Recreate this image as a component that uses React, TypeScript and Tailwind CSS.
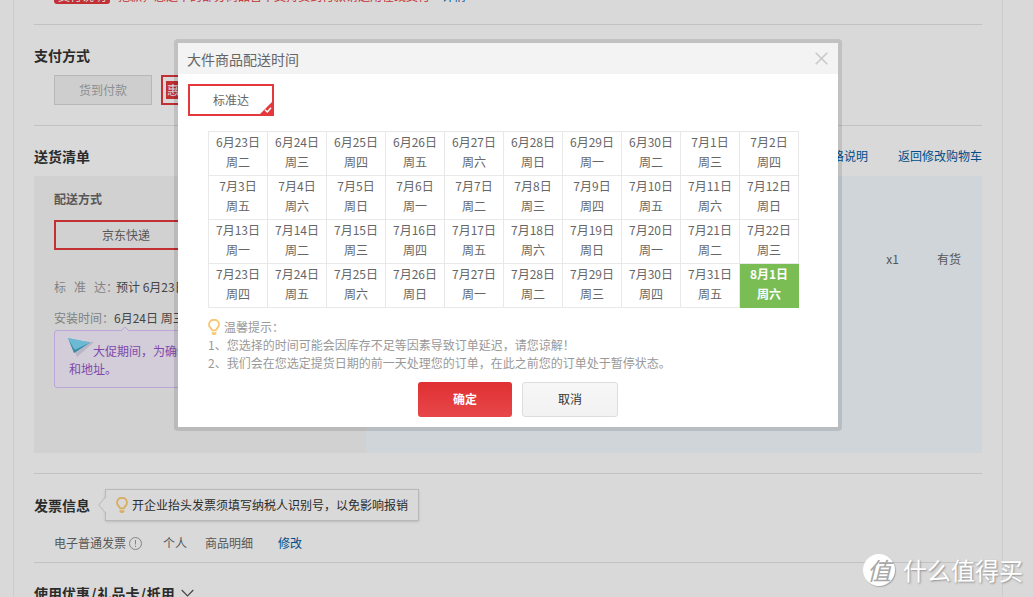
import { useState } from "react";

type BulbProps = {
  color: string;
};

const WEEKDAYS = ["日", "一", "二", "三", "四", "五", "六"];
const COLUMNS = 10;
const TOTAL_DAYS = 40;

// 2020-06-23 is the first day that can be delivered
function buildDates() {
  return Array.from({ length: TOTAL_DAYS }, (_, i) => {
    const date = new Date(2020, 5, 23 + i);
    return {
      day: `${date.getMonth() + 1}月${date.getDate()}日`,
      weekday: `周${WEEKDAYS[date.getDay()]}`,
    };
  });
}

const DATES = buildDates();
const ROWS = Array.from({ length: TOTAL_DAYS / COLUMNS }, (_, r) =>
  DATES.slice(r * COLUMNS, (r + 1) * COLUMNS)
);

function Bulb({ color }: BulbProps) {
  return (
    <svg width="12" height="16" viewBox="0 0 12 16" fill="none" aria-hidden="true">
      <path
        d="M4.2 11.4C4.1 9.7 1 8.8 1 5.7a5 5 0 0 1 10 0c0 3.1-3.1 4-3.2 5.7z"
        stroke={color}
        strokeWidth="1.9"
        strokeLinejoin="round"
      />
      <path d="M3.6 13.2h4.8v1.1L7.3 16H4.7l-1.1-1.7z" fill={color} />
    </svg>
  );
}

function PaperPlane() {
  return (
    <svg
      className="absolute left-3 top-1.5"
      width="28"
      height="22"
      viewBox="0 0 28 22"
      aria-hidden="true"
    >
      <path d="M3 3 27 5 10 20z" fill="#8a8aa0" opacity="0.35" />
      <path d="M1 1 23 5.5 7 16z" fill="#6cb9d3" />
      <path d="M1 1 6.5 11 7 16z" fill="#3d8aa5" />
      <path d="M6.5 11 23 5.5 7 16z" fill="#3287a3" />
      <path d="M1 1 23 5.5 8 13z" fill="#6cb9d3" />
    </svg>
  );
}

function DeliveryDialog() {
  const [selected, setSelected] = useState("8月1日");

  return (
    <div className="absolute inset-x-0 top-[39px] flex justify-center">
      <div
        role="dialog"
        aria-labelledby="dialog-title"
        className="rounded-[4px] bg-black/11 p-1 text-[#666666]"
      >
        <div className="w-[660px] bg-white">
          <div className="flex h-[31px] items-center justify-between bg-[#f3f3f3] pl-[9px] pr-[10px]">
            <h2 id="dialog-title" className="text-sm">
              大件商品配送时间
            </h2>
            <button type="button" aria-label="关闭">
              <svg width="13" height="13" viewBox="0 0 13 13" aria-hidden="true">
                <path d="M.7.7l11.6 11.6M12.3.7.7 12.3" stroke="#c9c9c9" strokeWidth="1.6" />
              </svg>
            </button>
          </div>

          <div className="p-[10px]">
            <button
              type="button"
              className="relative block h-8 w-[86px] border-2 border-[#e4393c] bg-white"
            >
              标准达
              <svg
                className="absolute bottom-0 right-0"
                width="12"
                height="12"
                viewBox="0 0 12 12"
                aria-hidden="true"
              >
                <path d="M12 0v12H0z" fill="#e4393c" />
                <path d="M5 7.8 7.3 10 11 5.8" stroke="#fff" strokeWidth="1.5" fill="none" />
              </svg>
            </button>

            <div className="mt-[15px] pl-5">
              <table className="border-separate border-spacing-0 border-l border-t border-[#e8e8e8]">
                <tbody>
                  {ROWS.map((row) => (
                    <tr key={row[0].day}>
                      {row.map(({ day, weekday }) => (
                        <td
                          key={day}
                          className={
                            day === selected
                              ? "border-b border-r border-[#7abd54] bg-[#7abd54] p-0 font-bold text-white"
                              : "border-b border-r border-[#e8e8e8] p-0"
                          }
                        >
                          <button
                            type="button"
                            onClick={() => setSelected(day)}
                            className="block w-[58px] pb-[3px] leading-5"
                          >
                            {day}
                            <br />
                            {weekday}
                          </button>
                        </td>
                      ))}
                    </tr>
                  ))}
                </tbody>
              </table>

              <div className="mt-[10px] leading-[18px] text-[#999999]">
                <p className="flex items-center gap-1">
                  <Bulb color="#f7c873" />
                  温馨提示：
                </p>
                <p>1、您选择的时间可能会因库存不足等因素导致订单延迟，请您谅解！</p>
                <p>2、我们会在您选定提货日期的前一天处理您的订单，在此之前您的订单处于暂停状态。</p>
              </div>

              <div className="mt-[10px] flex justify-center gap-[10px]">
                <button
                  type="button"
                  className="h-[35px] w-[94px] rounded-[3px] bg-linear-to-b from-[#e03033] to-[#e74649] pb-0.5 font-bold text-white"
                >
                  确定
                </button>
                <button
                  type="button"
                  className="h-[35px] w-24 rounded-[3px] border border-[#dddddd] bg-linear-to-b from-[#f7f7f7] to-[#f2f2f2] pb-0.5 text-[#333333]"
                >
                  取消
                </button>
              </div>
            </div>
          </div>
        </div>
      </div>
    </div>
  );
}

function Payment() {
  return (
    <section className="border-t border-[#c2c2c2] py-5">
      <h3 className="text-sm font-bold leading-5 text-[#2b2b2b]">支付方式</h3>
      <div className="mt-[10px] flex gap-[9px] pl-5">
        <button
          type="button"
          disabled
          className="h-[30px] w-[98px] border border-[#b8b8b8] bg-[#cecece] text-[#8f8f8f]"
        >
          货到付款
        </button>
        <button
          type="button"
          className="flex h-[30px] items-center gap-1 border-2 border-[#c23033] px-[3px] text-[#575757]"
        >
          <span className="bg-[#c23033] px-px leading-[18px] text-[#d9d9d9]">惠</span>
          在线支付
        </button>
      </div>
    </section>
  );
}

function Shipping() {
  return (
    <section className="border-t border-[#c2c2c2] py-5">
      <div className="flex items-center leading-5">
        <h3 className="flex-1 text-sm font-bold leading-5 text-[#2b2b2b]">送货清单</h3>
        <div className="flex gap-[30px] text-[#004d88]">
          <a href="#price">价格说明</a>
          <a href="#cart">返回修改购物车</a>
        </div>
      </div>

      <div className="mt-[10px] flex text-[#575757]">
        <div className="w-[332px] shrink-0 bg-[#d1d1d1] px-5 pb-[65px] pt-[13px] leading-5">
          <h4 className="font-bold">配送方式</h4>
          <button
            type="button"
            className="mt-[11px] block h-[30px] w-36 border-2 border-[#c23033]"
          >
            京东快递
          </button>
          <p className="mt-[27px] flex">
            <span className="flex w-[62px] gap-2 text-[#828282]">
              <span>标</span>
              <span>准</span>
              <span>达：</span>
            </span>
            <span className="text-[#454545]">预计 6月23日 送达</span>
          </p>
          <p className="mt-[11px] flex">
            <span className="w-[60px] text-[#828282]">安装时间：</span>
            <span className="text-[#454545]">6月24日 周三</span>
          </p>
          <div className="relative mt-0.5 rounded-[3px] border border-[#bda5d9] bg-[#d2cdd8] px-[14px] pb-[9px] pt-[11px] indent-6 leading-[18px] text-[#8048ad]">
            <svg
              className="absolute -top-[5px] left-[65px]"
              width="10"
              height="6"
              viewBox="0 0 10 6"
              aria-hidden="true"
            >
              <path d="M0 5.5 5 .7l5 4.8V6H0z" fill="#d2cdd8" />
              <path d="M1 5 5 1l4 4" fill="none" stroke="#bda5d9" />
            </svg>
            <PaperPlane />
            大促期间，为确保顺利送达，请您核对电话
            <span className="block indent-0">和地址。</span>
          </div>
        </div>

        <div className="flex flex-1 justify-end gap-[38px] bg-[#cfd5d9] pr-[21px] pt-[73px] leading-5">
          <span>x1</span>
          <span>有货</span>
        </div>
      </div>
    </section>
  );
}

function Invoice() {
  return (
    <section className="border-t border-[#c2c2c2] pb-[9px] pt-[15px]">
      <div className="flex items-center gap-[15px]">
        <h3 className="text-sm font-bold leading-5 text-[#2b2b2b]">发票信息</h3>
        <div className="relative flex h-8 items-center gap-1 border border-[#b8b8b8] px-[10px] text-[#2b2b2b] shadow-sm">
          <svg
            className="absolute -left-2 top-1.5"
            width="9"
            height="18"
            viewBox="0 0 9 18"
            aria-hidden="true"
          >
            <path d="M9 .5.7 9 9 17.5z" fill="#d9d9d9" />
            <path d="M7.5 1 .7 9l6.8 8" fill="none" stroke="#b8b8b8" />
          </svg>
          <Bulb color="#d8af61" />
          开企业抬头发票须填写纳税人识别号，以免影响报销
        </div>
      </div>
      <div className="mt-3 flex h-5 items-center pl-5 text-[#575757]">
        <span>电子普通发票</span>
        <svg
          className="ml-[3px]"
          width="13"
          height="13"
          viewBox="0 0 13 13"
          fill="none"
          stroke="#858585"
          aria-hidden="true"
        >
          <circle cx="6.5" cy="6.5" r="6" />
          <path d="M6.5 3v4.5M6.5 8.7v1.3" />
        </svg>
        <span className="ml-[21px]">个人</span>
        <span className="ml-[18px]">商品明细</span>
        <a href="#invoice" className="ml-[25px] text-[#004d88]">
          修改
        </a>
      </div>
    </section>
  );
}

function Watermark() {
  return (
    <div className="absolute bottom-[11px] right-[10px] flex items-center gap-2 text-2xl leading-8 text-white">
      <span className="flex size-8 items-center justify-center rounded-full bg-white italic text-[#a8a8a8] shadow-[1px_1px_1px_#a8a8a8]">
        值
      </span>
      <span className="leading-8 [text-shadow:1px_1px_2px_#8f8f8f]">什么值得买</span>
    </div>
  );
}

export default function App() {
  return (
    <div className="relative h-screen overflow-hidden bg-[#d9d9d9] font-['Noto_Sans_CJK_SC',sans-serif] text-xs">
      <main className="relative ml-[13px] mr-[30px] flow-root min-h-full border-x border-[#cccccc] px-5">
        {/* notice row is scrolled almost out of view */}
        <div className="-mt-4 flex h-10 gap-2 pl-5">
          <span className="h-5 rounded-[3px] bg-[#c23033] px-1 leading-6 text-[#d9d9d9]">
            支付说明
          </span>
          <p className="leading-6 text-[#c23033]">
            抱歉，您选中的部分商品暂不支持货到付款请选用在线支付
          </p>
          <a href="#detail" className="ml-1 leading-6 text-[#004d88]">
            详情
          </a>
        </div>
        <Payment />
        <Shipping />
        <Invoice />
        <section className="border-t border-[#c2c2c2] pt-5">
          <h3 className="flex items-center text-sm font-bold leading-5 text-[#2b2b2b]">
            使用优惠<span className="px-px">/</span>礼品卡<span className="px-px">/</span>抵用
            <svg
              className="ml-1.5"
              width="13"
              height="8"
              viewBox="0 0 13 8"
              fill="none"
              aria-hidden="true"
            >
              <path d="M.7 1l5.8 5.8L12.3 1" stroke="#454545" strokeWidth="1.2" />
            </svg>
          </h3>
        </section>
        <DeliveryDialog />
      </main>
      <Watermark />
    </div>
  );
}
